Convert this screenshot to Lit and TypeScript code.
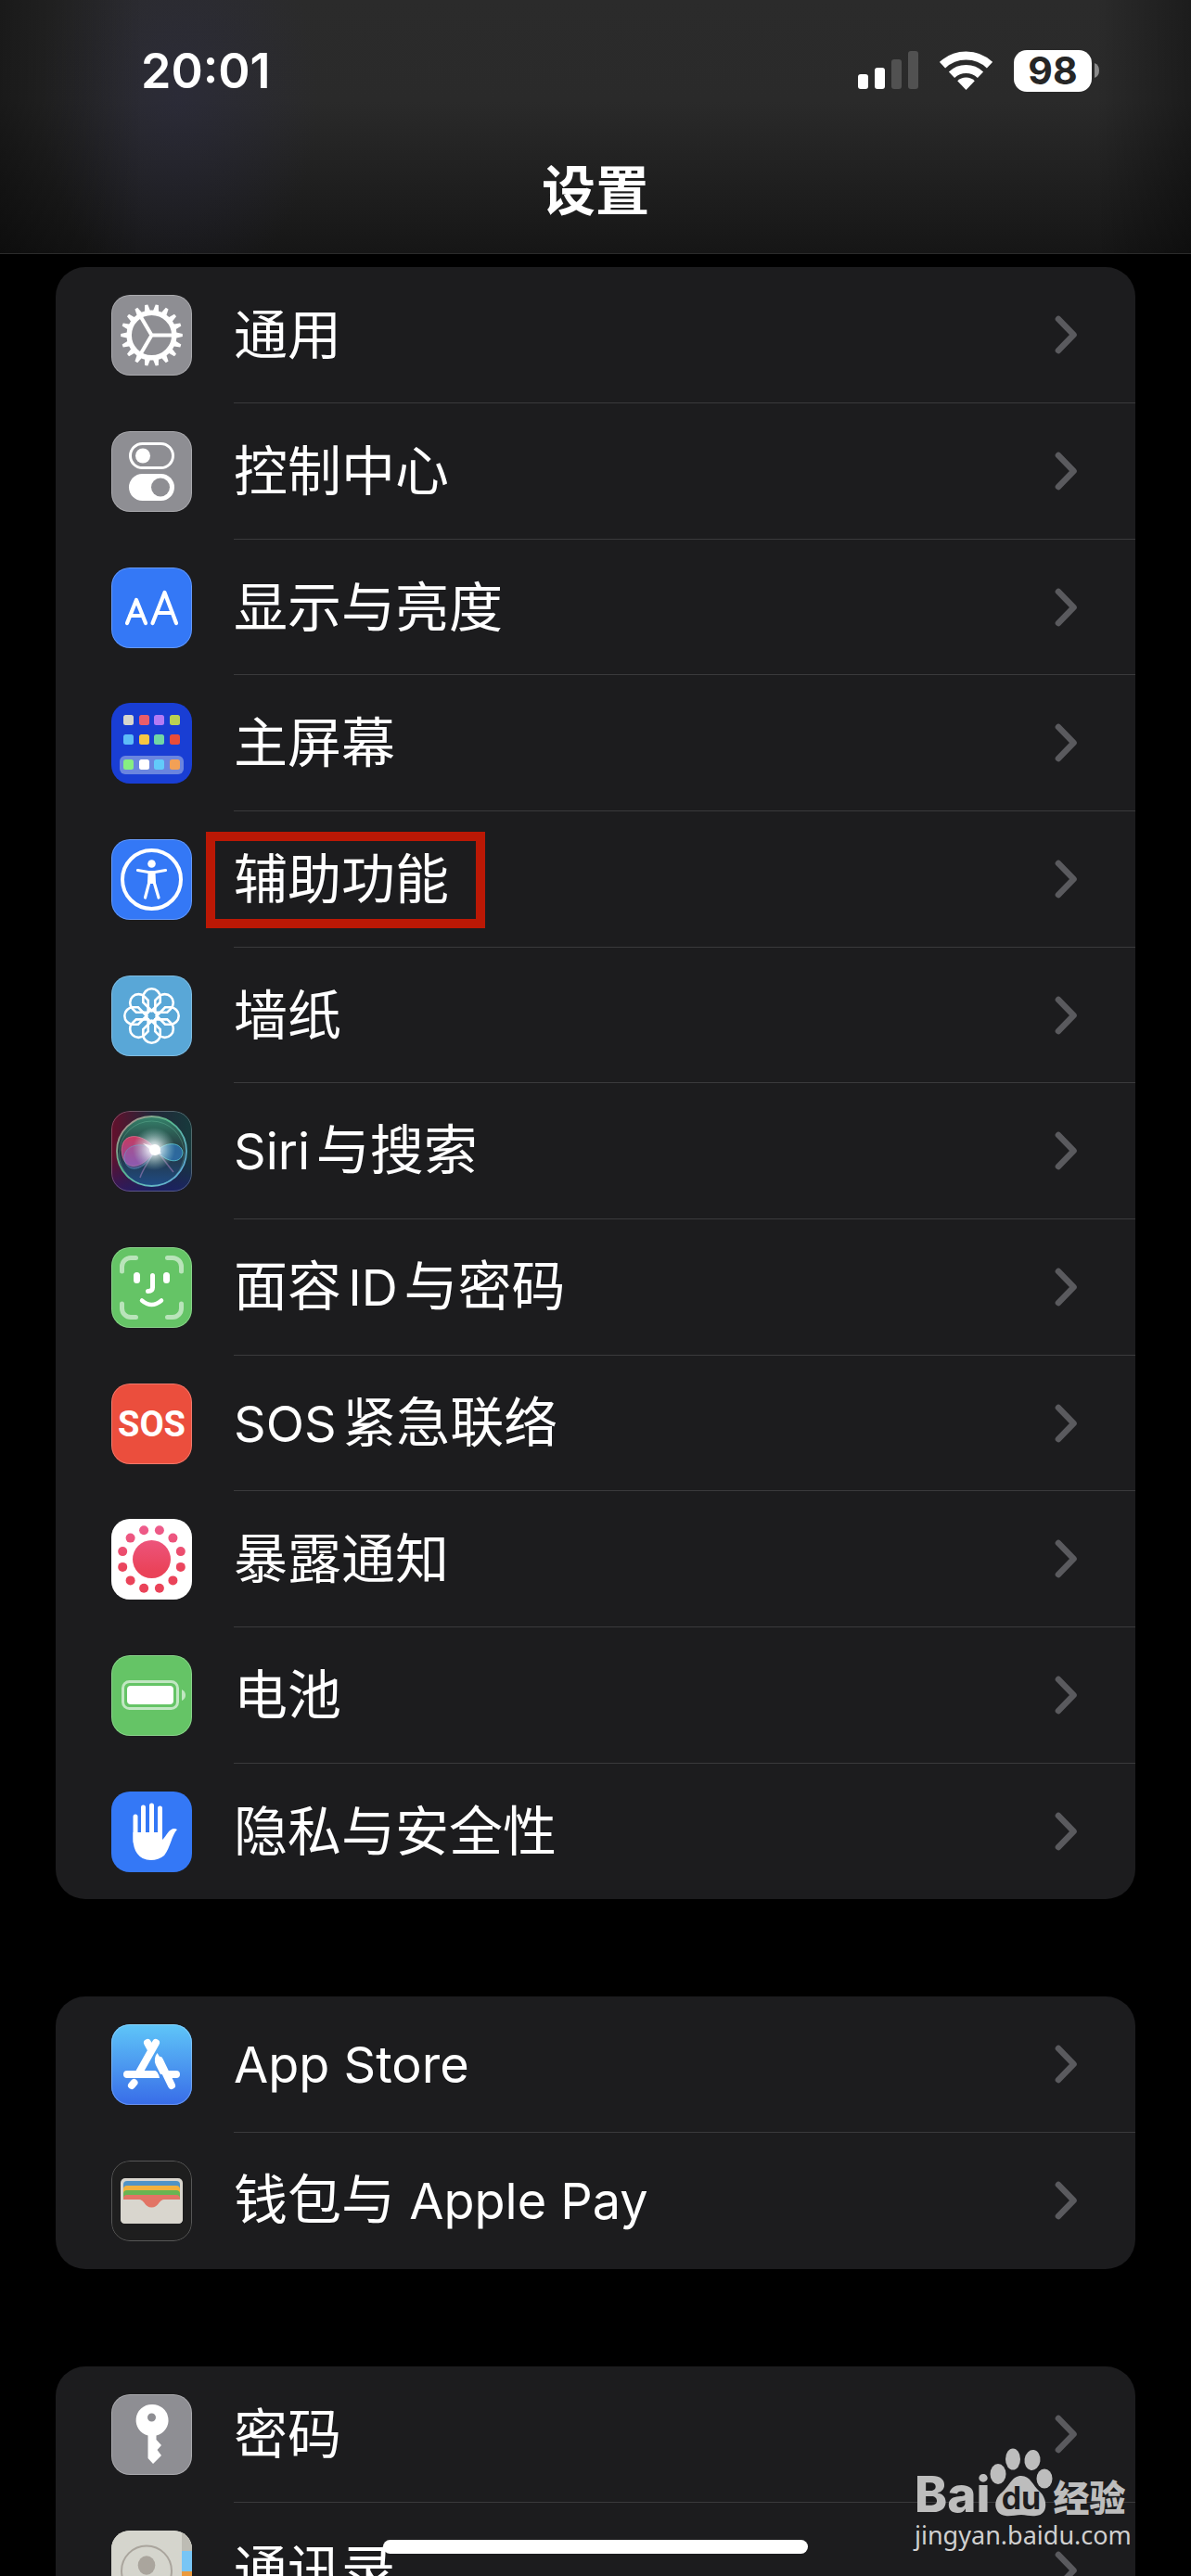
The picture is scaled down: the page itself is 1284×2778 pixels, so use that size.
import { LitElement, html, css, svg } from "lit";
import { customElement } from "lit/decorators.js";

const range = (n: number) => Array.from({ length: n }, (_, i) => i);

const icons: Record<string, unknown> = {
  general: svg`
    ${range(18).map((i) => svg`<path d="M40.3 18 L41.900 10.200 H45.100 L46.700 18 Z" fill="#fff" transform="rotate(${i * 20 + 10} 43.5 43.5)"/>`)}
    <circle cx="43.5" cy="43.5" r="24.300" fill="none" stroke="#fff" stroke-width="5.500"/>
    <g stroke="#fff" stroke-width="4"><path d="M43.5 43.5H66M43.5 43.5L32 24M43.5 43.5L32 63"/></g>`,
  control: svg`
    <rect x="20.5" y="13.5" width="46" height="26" rx="13" fill="none" stroke="#fff" stroke-width="3"/>
    <circle cx="34" cy="26.500" r="8" fill="#fff"/>
    <rect x="19" y="46" width="49" height="29" rx="14.5" fill="#fff"/>
    <circle cx="53" cy="60.500" r="10" fill="#8e8e93"/>`,
  display: svg`<g fill="none" stroke="#fff" stroke-width="4.200" stroke-linecap="round" stroke-linejoin="round">
    <path d="M17 60L27 35L37 60M20 52H34"/><path d="M44.500 60L57.500 27L70 60M49 49H66"/></g>`,
  home: svg`
    <rect x="9" y="57" width="69" height="20" rx="6" fill="#6a85df"/>
    ${["#d6d6cd", "#ea5d6a", "#b27af5", "#b9d253", "#5dbcf8", "#f7c642", "#71d6a5", "#e94c3a", "#86ee82", "#ffffff", "#62cbfa", "#f2a056"].map(
      (c, i) => svg`<rect x="${[13, 30, 46, 63][i % 4]}" y="${[13, 34, 61][Math.floor(i / 4)]}" width="11" height="11" rx="2.5" fill="${c}"/>`
    )}`,
  access: svg`
    <circle cx="43.500" cy="43.500" r="31.500" fill="none" stroke="#fff" stroke-width="4"/>
    <circle cx="43.500" cy="26.500" r="4.300" fill="#fff"/>
    <g fill="#fff" stroke="#fff" stroke-linecap="round" stroke-linejoin="round">
      <path d="M28.500 33.500L40 35.500H47L58.500 33.500" fill="none" stroke-width="3.200"/>
      <path d="M40.500 36H46.500L47 47H40Z" stroke-width="2"/>
      <path d="M41 46L36.500 63M46 46L51 63" stroke-width="3.200"/>
    </g>`,
  wallpaper: svg`<g fill="none" stroke="#fff" stroke-width="2.600">
    ${range(8).map((i) => svg`<path d="M43.5 38 L34.300 29 V23.500 A9.200 9.200 0 0 1 52.700 23.500 V29 Z" transform="rotate(${i * 45} 43.5 43.5)"/>`)}
    <circle cx="43.500" cy="43.500" r="5.500"/></g>`,
  siri: svg`
    <defs>
      <linearGradient id="sa" x1="0" y1="0" x2="1" y2="0"><stop offset="0" stop-color="#64102c"/><stop offset=".5" stop-color="#222638"/><stop offset="1" stop-color="#173a3c"/></linearGradient>
      <linearGradient id="sb" x1="0" y1="0" x2="0" y2="1"><stop offset=".55" stop-color="#1a1a60" stop-opacity="0"/><stop offset="1" stop-color="#1c1c74" stop-opacity=".7"/></linearGradient>
      <linearGradient id="sc" x1="0" y1="0" x2="0" y2="1"><stop offset="0" stop-color="#35836b"/><stop offset=".5" stop-color="#24343c"/><stop offset="1" stop-color="#1f4c86"/></linearGradient>
      <linearGradient id="sd" x1="0" y1="0" x2="1" y2="1"><stop offset="0" stop-color="#c9838f"/><stop offset=".4" stop-color="#57b98c"/><stop offset="1" stop-color="#62a8ee"/></linearGradient>
      <linearGradient id="se" x1="0" y1="0" x2="0" y2="1"><stop offset="0" stop-color="#d83a64"/><stop offset="1" stop-color="#9a4fae"/></linearGradient>
      <radialGradient id="sf"><stop offset="0" stop-color="#fff"/><stop offset=".3" stop-color="#effcff" stop-opacity=".75"/><stop offset="1" stop-color="#9fe0d8" stop-opacity="0"/></radialGradient>
    </defs>
    <rect width="87" height="87" fill="url(#sa)"/><rect width="87" height="87" fill="url(#sb)"/>
    <circle cx="43.500" cy="43.500" r="37.500" fill="url(#sc)" stroke="url(#sd)" stroke-width="1.800"/>
    <circle cx="43.500" cy="46" r="35" fill="none" stroke="#7fd0b0" stroke-opacity=".3"/>
    <path d="M47 41C38 26 12 20 11 42C12 66 33 64 47 43Z" fill="url(#se)" fill-opacity=".9" stroke="#ef7fa0" stroke-opacity=".6"/>
    <path d="M47 43C34 68 16 66 14 52C13 36 34 32 47 43Z" fill="#8a6fc0" fill-opacity=".4" stroke="#58b5d8" stroke-opacity=".5"/>
    <path d="M49 43C60 32 76 34 77 45C76 57 60 57 49 43Z" fill="#2f76b4" fill-opacity=".8" stroke="#59d0d8" stroke-opacity=".8"/>
    <path d="M46 44C40 56 34 62 31 72M50 44C56 52 62 60 67 66" fill="none" stroke="#c58fd0" stroke-opacity=".45" stroke-width="1.500"/>
    <circle cx="46" cy="41" r="23" fill="url(#sf)"/>
    <circle cx="47" cy="42" r="6" fill="#fff"/>
    <path d="M34 35L49 39L54 46L48 47Z" fill="#fff" fill-opacity=".8"/>`,
  face: svg`<g fill="none" stroke="#fff" stroke-linecap="round" stroke-linejoin="round">
    <path d="M11.500 26V21A9.500 9.500 0 0 1 21 11.500H26.500M60.500 11.500H66A9.500 9.500 0 0 1 75.500 21V26M75.500 61V66A9.500 9.500 0 0 1 66 75.500H60.500M26.500 75.500H21A9.500 9.500 0 0 1 11.500 66V61" stroke-width="5" stroke-opacity=".55"/>
    <path d="M27.500 30.500V35.500M59.500 30.500V35.500" stroke-width="7"/>
    <path d="M44.500 30.500V43.500Q44.500 47.500 39.500 47.500" stroke-width="5"/>
    <path d="M33 57.500Q43.500 66.500 54 57.500" stroke-width="4.500"/></g>`,
  sos: svg`<text class="sos" x="43.500" y="57" text-anchor="middle">SOS</text>`,
  exposure: svg`
    <defs><linearGradient id="ex" gradientUnits="userSpaceOnUse" x1="0" y1="8" x2="0" y2="56"><stop offset="0" stop-color="#ee5c8c"/><stop offset="1" stop-color="#ea4359"/></linearGradient></defs>
    <g fill="url(#ex)"><circle cx="43.500" cy="43.500" r="20.500"/>
    ${range(12).map((i) => {
      const a = ((i * 30 + 15) * Math.PI) / 180;
      return svg`<circle cx="${43.5 + 32.4 * Math.cos(a)}" cy="${43.5 + 32.4 * Math.sin(a)}" r="5"/>`;
    })}</g>`,
  battery: svg`
    <rect x="12.500" y="28.500" width="59" height="29" rx="7" fill="none" stroke="#fff" stroke-opacity=".6" stroke-width="3"/>
    <rect x="17" y="33" width="50" height="20" rx="4" fill="#fff"/>
    <path d="M76 37Q80 39 80 43T76 49Z" fill="#fff" fill-opacity=".6"/>`,
  privacy: svg`<g fill="none" stroke="#fff" stroke-width="5" stroke-linecap="round"><path d="M26 27V54M34.500 17V46M43.500 15V46M52.500 18V48"/></g>
    <path d="M23.500 44H55V52C58 50 60 44 64 41.500Q67.500 39 71 41C65 47 64 60 57 69Q51 74 42.500 74Q33 74 28 67Q23.500 61 23.500 51Z" fill="#fff"/>`,
  appstore: svg`
    <defs><linearGradient id="as" x1="0" y1="0" x2="0" y2="1"><stop offset="0" stop-color="#5fc6f8"/><stop offset="1" stop-color="#386ce8"/></linearGradient></defs>
    <rect width="87" height="87" fill="url(#as)"/>
    <g stroke="#fff" stroke-width="8" stroke-linecap="round" fill="none">
      <path d="M48 20L30 52M39 20L42 25.500M52 39L65 66M17 54H46M62 54H70M24.500 63L22 66"/></g>
    <path d="M46 50Q51 51 52 58H45Z" fill="#fff"/>
    <path d="M49.500 31Q45 37 48 44L53 54H62L54 38Z" fill="#fff"/>`,
  wallet: svg`
    <rect x="10" y="19" width="67" height="49" rx="5" fill="#d9d6ce"/>
    <path d="M13 26Q13 22 17 22H70Q74 22 74 26V45H13Z" fill="#4f93c6"/>
    <path d="M13 31Q13 27 17 27H70Q74 27 74 31V45H13Z" fill="#f2b13c"/>
    <path d="M13 36Q13 32 17 32H70Q74 32 74 36V45H13Z" fill="#69b552"/>
    <path d="M13 41Q13 37 17 37H70Q74 37 74 41V45H13Z" fill="#e27465"/>
    <path d="M10 42H30C36 42 36 50 43.500 50S51 42 57 42H77V63Q77 68 72 68H15Q10 68 10 63Z" fill="#d9d6ce"/>
    <path d="M30 41.500C36 42.500 36 50.500 43.500 50.500S51 42.500 57 41.500Z" fill="#e27465"/>`,
  password: svg`<path fill="#fff" fill-rule="evenodd" d="M43.500 11A17 17 0 0 1 48.500 44.500V49L54 55L49.500 60L54 66L45 75L39.500 69V44.500A17 17 0 0 1 43.500 11ZM43.500 20.500A4.500 4.500 0 1 0 43.500 29.500A4.500 4.500 0 1 0 43.500 20.500Z"/>`,
  contacts: svg`
    <rect width="87" height="87" fill="#d5d5cd"/><rect x="76" width="11" height="22" fill="#bdbcb4"/>
    <rect x="76" y="22" width="11" height="22" fill="#78c5f5"/><rect x="76" y="44" width="11" height="22" fill="#eb9a3c"/><rect x="76" y="66" width="11" height="21" fill="#75c766"/>
    <circle cx="38" cy="43.500" r="27" fill="none" stroke="#aaa59d" stroke-width="2"/>
    <ellipse cx="38" cy="37.500" rx="9.300" ry="10.300" fill="#aaa59d"/><path d="M20 61Q24 51 38 51T56 61A26 26 0 0 1 20 61Z" fill="#aaa59d"/>`,
};

interface Item { id: string; label: string; color: string; marked?: boolean; plain?: boolean }

const groups: Item[][] = [
  [
    { id: "general", label: "通用", color: "#8e8e93" },
    { id: "control", label: "控制中心", color: "#8e8e93" },
    { id: "display", label: "显示与亮度", color: "#3478f6" },
    { id: "home", label: "主屏幕", color: "#193ed4", plain: true },
    { id: "access", label: "辅助功能", color: "#3478f6", marked: true },
    { id: "wallpaper", label: "墙纸", color: "#59a7d7" },
    { id: "siri", label: "Siri与搜索", color: "#1f2230" },
    { id: "face", label: "面容ID与密码", color: "#65c466" },
    { id: "sos", label: "SOS紧急联络", color: "#eb4e3d" },
    { id: "exposure", label: "暴露通知", color: "#ffffff" },
    { id: "battery", label: "电池", color: "#65c466" },
    { id: "privacy", label: "隐私与安全性", color: "#3478f6", plain: true },
  ],
  [
    { id: "appstore", label: "App Store", color: "#4c9af2" },
    { id: "wallet", label: "钱包与 Apple Pay", color: "#1e1e1e" },
  ],
  [
    { id: "password", label: "密码", color: "#8e8e93" },
    { id: "contacts", label: "通讯录", color: "#d5d5cd", plain: true },
  ],
];

@customElement("app-root")
export class AppRoot extends LitElement {
  static styles = css`
    :host {
      display: flex;
      flex-direction: column;
      position: relative;
      height: 100vh;
      overflow: hidden;
      background: #000;
      color: #fff;
      font-family: Inter, "Noto Sans CJK SC", sans-serif;
      font-size: 58px;
      text-autospace: normal;
    }
    .top {
      flex: none;
      box-sizing: border-box;
      height: 274px;
      border-bottom: 1px solid #2b2b2b;
      background:
        linear-gradient(90deg, rgba(0, 0, 0, 0.4), transparent 12%, transparent 92%, rgba(0, 0, 0, 0.35)),
        radial-gradient(ellipse 150px 220px at 15% 38%, rgba(45, 45, 75, 0.4), transparent),
        linear-gradient(180deg, #2b2b2b, #2a2a2a 40%, #161616);
    }
    .status {
      display: flex;
      align-items: center;
      justify-content: space-between;
      height: 76px;
      padding: 38px 98px 0 152px;
    }
    .time { font-size: 52px; font-weight: 600; }
    .signals { display: flex; align-items: center; gap: 23px; }
    .signals svg { display: block; }
    .battery { display: flex; align-items: center; gap: 3px; }
    .level {
      width: 84px;
      border-radius: 14px;
      background: #fff;
      color: #262626;
      font-size: 41px;
      line-height: 45px;
      font-weight: 700;
      text-align: center;
    }
    h1 {
      margin: 44px 0 0;
      font-size: 58px;
      line-height: 96px;
      font-weight: 600;
      text-align: center;
    }
    .lists {
      display: flex;
      flex-direction: column;
      gap: 105px;
      padding: 14px 60px 0;
    }
    .card {
      flex: none;
      margin: 0;
      padding: 0;
      list-style: none;
      border-radius: 32px;
      background: #1c1c1e;
      overflow: hidden;
    }
    .item { height: 147px; }
    .item:nth-child(3n) { height: 146px; }
    .row {
      display: flex;
      align-items: center;
      gap: 45px;
      height: 100%;
      padding-left: 60px;
      color: inherit;
      text-decoration: none;
    }
    .icon { position: relative; flex: none; width: 87px; height: 87px; border-radius: 20px; overflow: hidden; }
    .icon svg { display: block; }
    .rim::after {
      content: "";
      position: absolute;
      inset: 0;
      border: 1px solid rgba(255, 255, 255, 0.25);
      border-radius: 20px;
    }
    .body {
      display: flex;
      align-items: center;
      justify-content: space-between;
      flex: 1;
      height: 100%;
      box-sizing: border-box;
      padding-right: 62px;
      border-bottom: 1px solid #3a3a3c;
    }
    .item:last-child .body { border-bottom-color: transparent; }
    .label { position: relative; line-height: 84px; white-space: nowrap; }
    .latin { font-size: 54px; }
    .marked::after {
      content: "";
      position: absolute;
      inset: -9px -39px -11px -30px;
      border: 10px solid #bb1805;
    }
    .sos { font: 700 38px "Liberation Sans Narrow", Roboto, sans-serif; fill: #fff; }
    .indicator {
      position: absolute;
      bottom: 24px;
      left: 50%;
      width: 458px;
      height: 15px;
      margin-left: -229px;
      border-radius: 8px;
      background: #fff;
    }
    .mark {
      position: absolute;
      right: 68px;
      bottom: 26px;
      width: 230px;
      color: #bdbdbd;
    }
    .brand { display: flex; align-items: flex-end; height: 76px; }
    .bai { font-size: 53px; font-weight: 800; line-height: 52px; }
    .exp { font-size: 39px; font-weight: 900; line-height: 44px; white-space: nowrap; }
    .site { font: 27px "Noto Sans", sans-serif; line-height: 36px; color: #d0d0d0; }
    .du { font: 700 34px Inter, sans-serif; fill: #1c1c1e; }
  `;

  private label(text: string) {
    return text
      .split(/( ?[A-Za-z][A-Za-z ]*)/)
      .filter(Boolean)
      .map((part) => (/[A-Za-z]/.test(part) ? html`<span class="latin">${part}</span>` : part));
  }

  private row(item: Item) {
    return html`<li class="item">
      <a class="row" href="#${item.id}">
        <span class="icon ${item.plain ? "" : "rim"}">
          <svg width="87" height="87" viewBox="0 0 87 87" aria-hidden="true">
            <rect width="87" height="87" fill=${item.color} />${icons[item.id]}
          </svg>
        </span>
        <span class="body">
          <span class="label ${item.marked ? "marked" : ""}">${this.label(item.label)}</span>
          <svg width="25" height="42" viewBox="0 0 25 42" fill="none" stroke="#5a5a5e" stroke-width="6.600" stroke-linecap="round" stroke-linejoin="round" aria-hidden="true">
            <path d="M4 4L20.500 21L4 38" />
          </svg>
        </span>
      </a>
    </li>`;
  }

  render() {
    return html`
      <header class="top">
        <div class="status">
          <span class="time">20:01</span>
          <div class="signals">
            <svg width="65" height="42" viewBox="0 0 65 42" fill="#fff" aria-hidden="true">
              <rect y="25" width="11" height="16" rx="3" /><rect x="18" y="18" width="11" height="23" rx="3" />
              <rect x="36" y="9" width="11" height="32" rx="3" fill="#515151" /><rect x="54" width="11" height="41" rx="3" fill="#515151" />
            </svg>
            <svg width="57" height="42" viewBox="0 0 57 42" aria-hidden="true">
              <path d="M28.500 42L19.200 32.200A13.500 13.500 0 0 1 37.800 32.200Z" fill="#fff" />
              <path d="M13 25.700A22.500 22.500 0 0 1 44 25.700M3 15.200A37 37 0 0 1 54 15.200" fill="none" stroke="#fff" stroke-width="9" />
            </svg>
            <div class="battery">
              <span class="level">98</span>
              <svg width="6" height="16" viewBox="0 0 6 16" aria-hidden="true"><path d="M0 0Q5 2 5 8T0 16Z" fill="#8a8a8a" /></svg>
            </div>
          </div>
        </div>
        <h1>设置</h1>
      </header>
      <main class="lists">
        ${groups.map((g) => html`<ul class="card">${g.map((i) => this.row(i))}</ul>`)}
      </main>
      <div class="mark">
        <div class="brand">
          <span class="bai">Bai</span>
          <svg width="68" height="76" viewBox="0 0 68 76" fill="#bdbdbd" aria-hidden="true">
            <ellipse cx="9" cy="28" rx="8.500" ry="11" /><ellipse cx="25" cy="12" rx="8" ry="11.500" />
            <ellipse cx="46" cy="13" rx="8.500" ry="11" transform="rotate(8 46 13)" /><ellipse cx="59" cy="33" rx="8.500" ry="10.500" />
            <path d="M34 30C44 30 46 40 54 47C62 54 64 72 50 73C44 74 40 72 34 72S22 74 17 73C4 71 3 56 13 48C22 40 24 30 34 30Z" />
            <text class="du" x="34" y="66" text-anchor="middle">du</text>
          </svg>
          <span class="exp">经验</span>
        </div>
        <div class="site">jingyan.baidu.com</div>
      </div>
      <div class="indicator"></div>
    `;
  }
}
